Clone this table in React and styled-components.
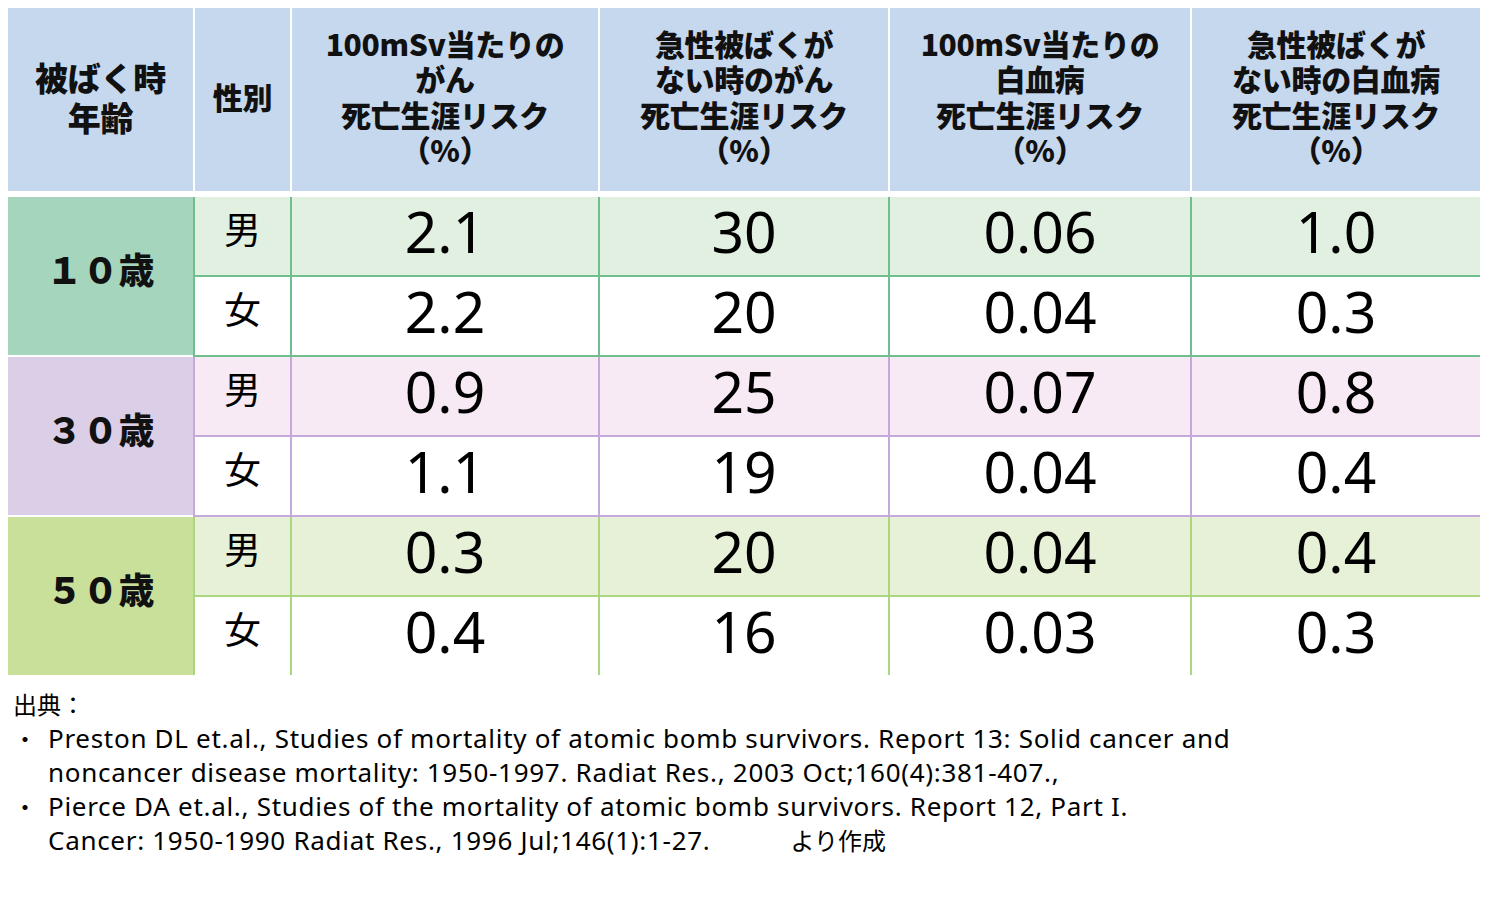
import React from 'react'
import styled, { createGlobalStyle } from 'styled-components'

const GlobalStyle = createGlobalStyle`
  html, body {
    margin: 0;
    padding: 0;
    background: #ffffff;
  }
  body {
    font-family: "Noto Sans CJK JP", "Noto Sans", sans-serif;
    color: #000;
  }
`

const COLS = '185px 95px 306px 288px 300px 288px'

const GROUPS = [
  {
    age: '１０歳',
    ageBg: '#a6d5bd',
    tint: '#e2f0e1',
    line: '#6fbe8d',
    rows: [
      { sex: '男', values: ['2.1', '30', '0.06', '1.0'] },
      { sex: '女', values: ['2.2', '20', '0.04', '0.3'] },
    ],
  },
  {
    age: '３０歳',
    ageBg: '#dbcee7',
    tint: '#f8eaf4',
    line: '#c5a9da',
    rows: [
      { sex: '男', values: ['0.9', '25', '0.07', '0.8'] },
      { sex: '女', values: ['1.1', '19', '0.04', '0.4'] },
    ],
  },
  {
    age: '５０歳',
    ageBg: '#c9e09b',
    tint: '#e6f1d7',
    line: '#a9d67f',
    rows: [
      { sex: '男', values: ['0.3', '20', '0.04', '0.4'] },
      { sex: '女', values: ['0.4', '16', '0.03', '0.3'] },
    ],
  },
]

const HEADERS = [
  { big: true, lines: ['被ばく時', '年齢'] },
  { lines: ['性別'] },
  { lines: ['100mSv当たりの', 'がん', '死亡生涯リスク', '（%）'] },
  { lines: ['急性被ばくが', 'ない時のがん', '死亡生涯リスク', '（%）'] },
  { lines: ['100mSv当たりの', '白血病', '死亡生涯リスク', '（%）'] },
  { lines: ['急性被ばくが', 'ない時の白血病', '死亡生涯リスク', '（%）'] },
]

export default function App() {
  return (
    <Page>
      <GlobalStyle />
      <Table>
        <HeaderRow>
          {HEADERS.map((h, i) => (
            <HeadCell key={i} $big={h.big}>
              {h.lines.map(l => (
                <HeadLine key={l} $big={h.big}>{l}</HeadLine>
              ))}
            </HeadCell>
          ))}
        </HeaderRow>

        {GROUPS.map((g, gi) => {
          const last = gi === GROUPS.length - 1
          return (
            <Group key={g.age} $line={g.line} $last={last}>
              <AgeCell $bg={g.ageBg} $last={last}>{g.age}</AgeCell>
              {g.rows.map((r, ri) => {
                const bottom = !last && ri === 1
                const bg = ri === 0 ? g.tint : '#ffffff'
                return (
                  <React.Fragment key={r.sex}>
                    <SexCell $bg={bg} $bottom={bottom} $line={g.line}>{r.sex}</SexCell>
                    {r.values.map((v, vi) => (
                      <ValueCell key={vi} $bg={bg} $bottom={bottom} $line={g.line}>{v}</ValueCell>
                    ))}
                  </React.Fragment>
                )
              })}
            </Group>
          )
        })}
      </Table>

      <Source>
        <SourceTitle>出典：</SourceTitle>
        <Item>
          <Bullet>・</Bullet>
          <span>
            Preston DL et.al., Studies of mortality of atomic bomb survivors. Report 13: Solid cancer and<br />
            noncancer disease mortality: 1950-1997. Radiat Res., 2003 Oct;160(4):381-407.,
          </span>
        </Item>
        <Item>
          <Bullet>・</Bullet>
          <span>
            Pierce DA et.al., Studies of the mortality of atomic bomb survivors. Report 12, Part I.<br />
            Cancer: 1950-1990 Radiat Res., 1996 Jul;146(1):1-27.<Suffix>より作成</Suffix>
          </span>
        </Item>
      </Source>
    </Page>
  )
}

const Page = styled.div`
  width: 1500px;
  height: 913px;
  padding: 8px 0 0 8px;
  box-sizing: border-box;
`

const Table = styled.div`
  width: 1472px;
  display: flex;
  flex-direction: column;
`

const HeaderRow = styled.div`
  display: grid;
  grid-template-columns: ${COLS};
  column-gap: 2px;
  height: 183px;
  margin-bottom: 6px;
`

const HeadCell = styled.div`
  background: #c5d8ee;
  display: flex;
  flex-direction: column;
  align-items: center;
  justify-content: center;
  text-align: center;
  padding-bottom: 6px;
  box-sizing: border-box;
  font-family: "Noto Sans CJK JP", sans-serif;
  font-weight: 900;
  color: #111;
`

const HeadLine = styled.div`
  font-size: ${p => (p.$big ? '33px' : '30px')};
  height: ${p => (p.$big ? '40px' : '35.5px')};
  line-height: ${p => (p.$big ? '40px' : '35.5px')};
  letter-spacing: -0.3px;
  white-space: nowrap;
`

const Group = styled.div`
  display: grid;
  grid-template-columns: ${COLS};
  grid-template-rows: ${p => (p.$last ? '78px 78px' : '78px 80px')};
  column-gap: 2px;
  row-gap: 2px;
  background: ${p => p.$line};
`

const AgeCell = styled.div`
  grid-row: 1 / span 2;
  background: ${p => p.$bg};
  border-bottom: ${p => (p.$last ? 'none' : '2px solid #ffffff')};
  box-sizing: border-box;
  display: flex;
  align-items: center;
  justify-content: center;
  padding-bottom: 16px;
  font-family: "Noto Sans CJK JP", sans-serif;
  font-weight: 900;
  font-size: 36px;
  color: #111;
`

const BodyCell = styled.div`
  background: ${p => p.$bg};
  border-bottom: ${p => (p.$bottom ? `2px solid ${p.$line}` : 'none')};
  box-sizing: border-box;
  display: flex;
  align-items: center;
  justify-content: center;
  color: #000;
`

const SexCell = styled(BodyCell)`
  font-family: "Noto Sans CJK JP", sans-serif;
  font-size: 37px;
  font-weight: 400;
  padding-bottom: 16px;
`

const ValueCell = styled(BodyCell)`
  font-family: "Noto Sans", sans-serif;
  font-size: 57px;
  padding-bottom: 10px;
`

const Source = styled.div`
  padding: 12px 0 0 5px;
  font-family: "Noto Sans", "Noto Sans CJK JP", sans-serif;
  font-size: 26px;
  letter-spacing: 0.7px;
  line-height: 34px;
  color: #000;
`

const SourceTitle = styled.div`
  font-family: "Noto Sans CJK JP", sans-serif;
  font-size: 24px;
  letter-spacing: 0;
`

const Item = styled.div`
  display: grid;
  grid-template-columns: 35px 1fr;
`

const Bullet = styled.span`
  font-family: "Noto Sans CJK JP", sans-serif;
  font-size: 24px;
  letter-spacing: 0;
`

const Suffix = styled.span`
  margin-left: 80px;
  font-family: "Noto Sans CJK JP", sans-serif;
  font-size: 24px;
  letter-spacing: 0;
`
